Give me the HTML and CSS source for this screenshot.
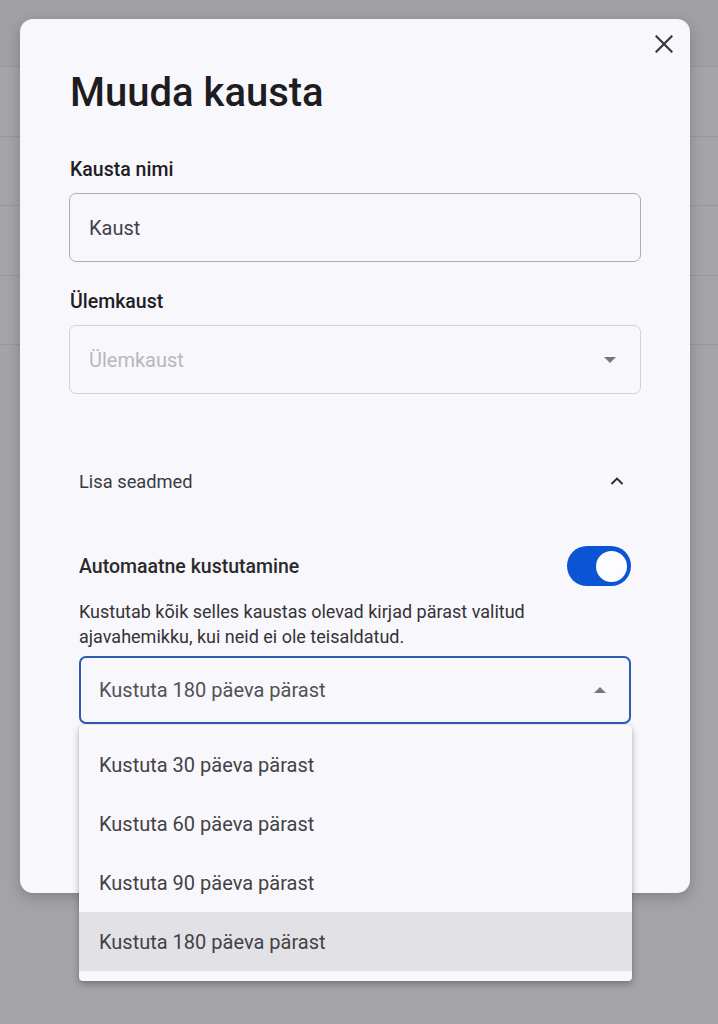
FILE: index.html
```html
<!DOCTYPE html>
<html lang="et">
<head>
<meta charset="utf-8">
<title>Muuda kausta</title>
<link rel="stylesheet" href="styles.css">
</head>
<body>
<div class="page">
  <div class="page-header"></div>
  <div class="page-row"></div>
  <div class="page-row"></div>
  <div class="page-row"></div>
  <div class="page-row"></div>
</div>

<div class="dialog" role="dialog">
  <button class="close-btn" aria-label="Sulge">
    <svg width="18" height="18" viewBox="0 0 18 18"><path d="M1.5 1.5 L16.5 16.5 M16.5 1.5 L1.5 16.5" stroke="#3a393d" stroke-width="2.2" fill="none" stroke-linecap="square"/></svg>
  </button>
  <h1 class="dialog-title">Muuda kausta</h1>

  <div class="field">
    <label class="field-label">Kausta nimi</label>
    <div class="input">Kaust</div>
  </div>

  <div class="field field-second">
    <label class="field-label">Ülemkaust</label>
    <div class="input input-disabled">
      <span class="placeholder">Ülemkaust</span>
      <span class="tri tri-down"></span>
    </div>
  </div>

  <div class="panel">
    <div class="panel-header">
      <span>Lisa seadmed</span>
      <svg class="chevron" width="14" height="8" viewBox="0 0 14 8"><path d="M1.5 7 L7 1.6 L12.5 7" stroke="#2b2a2e" stroke-width="2" fill="none"/></svg>
    </div>

    <div class="switch-row">
      <span class="switch-label">Automaatne kustutamine</span>
      <span class="switch"><span class="switch-knob"></span></span>
    </div>
    <p class="desc">Kustutab kõik selles kaustas olevad kirjad pärast valitud ajavahemikku, kui neid ei ole teisaldatud.</p>

    <div class="select-wrap">
      <div class="select-focused">
        <span>Kustuta 180 päeva pärast</span>
        <span class="tri tri-up"></span>
      </div>
      <ul class="menu">
        <li class="menu-item">Kustuta 30 päeva pärast</li>
        <li class="menu-item">Kustuta 60 päeva pärast</li>
        <li class="menu-item">Kustuta 90 päeva pärast</li>
        <li class="menu-item menu-item-active">Kustuta 180 päeva pärast</li>
      </ul>
    </div>
  </div>
</div>
</body>
</html>
```

FILE: styles.css
```css
* { box-sizing: border-box; }

html, body {
  margin: 0;
  padding: 0;
}

body {
  width: 718px;
  height: 1024px;
  overflow: hidden;
  background: #a4a3a8;
  font-family: Roboto, "Noto Sans", sans-serif;
  position: relative;
}

.page-header {
  height: 67px;
  background: #a1a0a5;
  border-bottom: 1px solid #98979c;
}

.page-row {
  height: 69.5px;
  border-bottom: 1px solid #98979c;
  background: #a5a4a9;
}

.dialog {
  position: absolute;
  left: 20px;
  top: 19px;
  width: 670px;
  height: 874px;
  background: #f8f7fb;
  border-radius: 13px;
  box-shadow: 0 4px 14px rgba(0, 0, 0, 0.22);
  padding: 50px 49px 0 49px;
}

.close-btn {
  position: absolute;
  top: 7px;
  right: 8px;
  width: 36px;
  height: 36px;
  border: 0;
  padding: 0;
  background: transparent;
  display: flex;
  align-items: center;
  justify-content: center;
}

.dialog-title {
  margin: 0 0 41px 1px;
  font-size: 40px;
  line-height: 48px;
  font-weight: 500;
  color: #1d1c20;
}

.field-label {
  display: block;
  font-size: 19.5px;
  line-height: 24px;
  font-weight: 500;
  color: #1f1e22;
  margin: 0 0 11px 1px;
}

.field-second {
  margin-top: 28px;
}

.input {
  height: 69px;
  border: 1px solid #aeadb2;
  border-radius: 7px;
  padding: 0 20px 0 19px;
  display: flex;
  align-items: center;
  justify-content: space-between;
  font-size: 20px;
  color: #444347;
}

.input-disabled {
  border-color: #d2d1d6;
}

.placeholder {
  color: #b8b7bc;
}

.tri {
  width: 0;
  height: 0;
  border-left: 6px solid transparent;
  border-right: 6px solid transparent;
}

.tri-down {
  border-top: 6px solid #78777c;
  margin-right: 4px;
}

.tri-up {
  border-bottom: 6px solid #78777c;
  margin-right: 3px;
}

.panel {
  padding: 0 10px;
}

.panel-header {
  margin-top: 55px;
  height: 64px;
  display: flex;
  align-items: center;
  justify-content: space-between;
  font-size: 18.3px;
  color: #3b3a3e;
}

.chevron {
  margin-right: 7px;
}

.switch-row {
  margin-top: 33px;
  display: flex;
  align-items: center;
  justify-content: space-between;
  height: 40px;
}

.switch-label {
  font-size: 19.5px;
  font-weight: 500;
  color: #2b2a2e;
}

.switch {
  width: 64px;
  height: 40px;
  border-radius: 20px;
  background: #0b55d4;
  display: flex;
  align-items: center;
  justify-content: flex-end;
  padding-right: 4px;
}

.switch-knob {
  width: 31px;
  height: 31px;
  border-radius: 50%;
  background: #fdfdff;
}

.desc {
  margin: 13px 0 7px 0;
  font-size: 18px;
  line-height: 25px;
  color: #343337;
}

.select-wrap {
  position: relative;
}

.select-focused {
  height: 68px;
  border: 2px solid #2a5cb2;
  border-radius: 7px;
  padding: 0 20px 0 18px;
  display: flex;
  align-items: center;
  justify-content: space-between;
  font-size: 20px;
  color: #525155;
}

.menu {
  position: absolute;
  left: 0;
  top: 69px;
  width: 553px;
  margin: 0;
  padding: 10px 0;
  list-style: none;
  background: #f8f7fb;
  border-radius: 4px;
  box-shadow: 0 3px 7px rgba(0, 0, 0, 0.28), 0 0 2px rgba(0, 0, 0, 0.12);
}

.menu-item {
  height: 59px;
  display: flex;
  align-items: center;
  padding-left: 20px;
  font-size: 20px;
  color: #434246;
}

.menu-item-active {
  background: #e2e1e6;
}
```
